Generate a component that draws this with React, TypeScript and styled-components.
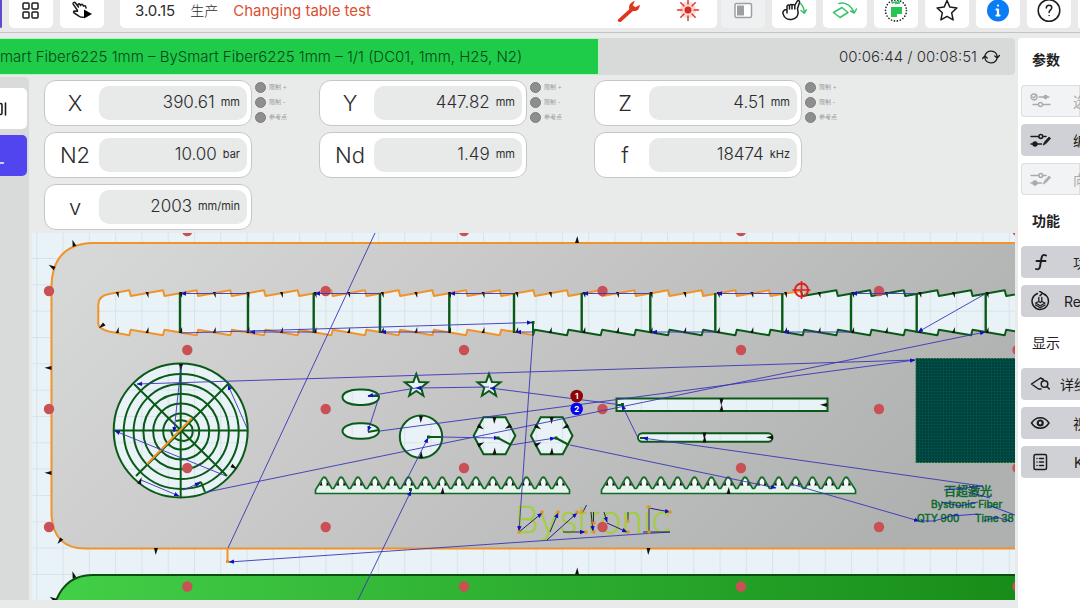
import React from "react";
import styled, { createGlobalStyle } from "styled-components";

const GlobalStyle = createGlobalStyle`
  * { box-sizing: border-box; }
  body {
    margin: 0;
    background: #e9ebeb;
    color: #2c2c2e;
    font-family: Inter, "Noto Sans CJK SC", sans-serif;
    overflow: hidden;
  }
  button { font: inherit; color: inherit; border: 0; padding: 0; cursor: pointer; }
`;

/* ---------- page frame ---------- */

const Page = styled.div`
  display: flex;
  flex-direction: column;
  min-height: 100vh;
`;

const Header = styled.header`
  display: flex;
  height: 33px;
  background: #e9e9e9;
  border-bottom: 1px solid #c4c4c6;
  overflow: hidden;
`;

const TileGroup = styled.nav`
  display: flex;
  flex: none;
  gap: 7px;
`;

const Tile = styled.button<{ $tone?: "muted" | "accent"; $narrow?: boolean }>`
  display: flex;
  flex: none;
  justify-content: center;
  width: ${(p) => (p.$narrow ? 2 : 44)}px;
  height: 28px;
  background: ${(p) => (p.$tone === "muted" ? "#eff0f2" : p.$tone === "accent" ? "#5a4bd0" : "#fff")};
  border-radius: 0 0 5px 5px;
`;

const TitleBar = styled.div`
  display: flex;
  flex: 1;
  align-items: center;
  gap: 15px;
  height: 28px;
  margin: 0 4px 0 16px;
  padding: 0 17px 6px 15px;
  background: #fff;
  border-radius: 0 0 5px 5px;
  font-size: 15px;
  line-height: 20px;
`;

const Mode = styled.span`
  font-size: 14px;
  font-weight: 300;
`;

const JobName = styled.span`
  color: #d9502f;
`;

const TitleTools = styled.div`
  display: flex;
  gap: 34px;
  margin-left: auto;
  height: 22px;
`;

const PlainButton = styled.button`
  display: flex;
  background: none;
`;

const Main = styled.main`
  display: flex;
  flex: 1;
  gap: 3px;
  padding-top: 5px;
`;

const Column = styled.div`
  display: flex;
  flex: 1;
  flex-direction: column;
  min-width: 0;
`;

/* ---------- progress ---------- */

const Progress = styled.div`
  display: flex;
  justify-content: space-between;
  height: 37px;
  background: #d8dada;
  border-radius: 0 4px 4px 0;
  font-size: 15px;
  font-weight: 300;
  line-height: 35px;
  white-space: nowrap;
`;

const ProgressFill = styled.div`
  background: #1fcc49;
  border: solid #b4f5bd;
  border-width: 1px 1px 1px 0;
  color: #07481a;
`;

const Clock = styled.div`
  display: flex;
  align-items: center;
  gap: 5px;
  padding-right: 15px;
  color: #2e2e30;
`;

/* ---------- work area ---------- */

const Body = styled.div`
  display: flex;
  flex: 1;
  gap: 3px;
  padding: 2px 0 8px;
`;

const Rail = styled.aside`
  display: flex;
  flex: none;
  flex-direction: column;
  gap: 6px;
  width: 29px;
  padding: 11px 2px 0 0;
  background: #d9dbdb;
  border-radius: 0 5px 0 0;
`;

const RailButton = styled.button<{ $active?: boolean }>`
  display: flex;
  align-items: center;
  height: 41px;
  background: ${(p) => (p.$active ? "#5145f0" : "#fff")};
  border-radius: 0 5px 5px 0;
`;

const Work = styled.section`
  display: flex;
  flex: 1;
  flex-direction: column;
  gap: 3px;
  min-width: 0;
`;

const Readings = styled.div`
  display: grid;
  grid-template-columns: repeat(3, 275px);
  gap: 6px 0;
  padding: 3px 0 0 12px;
`;

const Reading = styled.div`
  display: flex;
  gap: 3px;
`;

const Card = styled.div`
  display: flex;
  align-items: center;
  width: 208px;
  height: 46px;
  padding-right: 4px;
  background: #fff;
  border: 1px solid #c6c6c8;
  border-radius: 12px;
`;

const AxisName = styled.span`
  flex: 1;
  padding-left: 6px;
  text-align: center;
  font-size: 22px;
  font-weight: 300;
`;

const ValueBox = styled.span`
  display: flex;
  justify-content: flex-end;
  align-items: center;
  gap: 6px;
  width: 148px;
  height: 34px;
  padding: 0 7px 2px 0;
  background: #e8e9e9;
  border-radius: 10px;
  font-size: 17px;
  font-weight: 300;
`;

const Unit = styled.span`
  font-size: 11px;
  font-weight: 400;
`;

const Limits = styled.ul`
  display: flex;
  flex-direction: column;
  gap: 5px;
  margin: 0;
  padding: 2px 0 0;
  list-style: none;
`;

const Limit = styled.li`
  display: flex;
  align-items: center;
  gap: 3px;
  height: 10px;
  color: #9a9a9c;
  font-size: 6px;
  line-height: 10px;

  &::before {
    content: "";
    width: 9px;
    height: 9px;
    background: #8e8e8e;
    border: 1px solid #7c7c7c;
    border-radius: 50%;
  }
`;

const Drawing = styled.svg`
  display: block;
  width: 100%;
  height: 367px;
`;

/* ---------- side panel ---------- */

const Panel = styled.aside`
  flex: none;
  width: 62px;
  padding: 0 0 0 3px;
  background: #fff;
  border-radius: 4px 0 0 0;
  overflow: hidden;
`;

const PanelTitle = styled.h2<{ $light?: boolean }>`
  margin: 0;
  padding-left: 11px;
  font-size: 14px;
  font-weight: ${(p) => (p.$light ? 400 : 700)};
  line-height: 43px;
  height: 47px;
  color: #222;
`;

const PanelGroup = styled.div`
  display: flex;
  flex-direction: column;
  gap: 7px;
  margin-bottom: 4px;
`;

const PanelButton = styled.button<{ $off?: boolean; $indent: number }>`
  display: flex;
  align-items: center;
  height: 32px;
  padding-left: 9px;
  background: ${(p) => (p.$off ? "#f2f3f5" : "#d0d1d6")};
  box-shadow: ${(p) => (p.$off ? "inset 0 0 0 1px #dcdee1" : "none")};
  color: ${(p) => (p.$off ? "#a9abad" : "#1c1c1e")};
  border-radius: 4px 0 0 4px;
  font-size: 14px;
  white-space: nowrap;
  overflow: hidden;

  svg { flex: none; }
  span { padding-left: ${(p) => p.$indent}px; }
`;

/* ---------- icons ---------- */

type IconProps = { w?: number; h?: number; children: React.ReactNode };
const Icon = ({ w = 24, h = 24, children }: IconProps) => (
  <svg
    width={w}
    height={h}
    viewBox={`0 0 ${w} ${h}`}
    fill="none"
    stroke="#1c1c1e"
    strokeWidth="1.5"
    strokeLinecap="round"
    strokeLinejoin="round"
    aria-hidden="true"
  >
    {children}
  </svg>
);

const AppsIcon = () => (
  <Icon>
    {[[4, 3], [13, 3], [4, 12], [13, 12]].map(([x, y]) => (
      <rect key={`${x}${y}`} x={x} y={y} width="6" height="6" rx="1" />
    ))}
  </Icon>
);

const HandRunIcon = () => (
  <Icon>
    <path d="M7.500 10.500 3.200 4.200A1.300 1.300 0 0 1 5.300 2.700L8.500 7l-.7-1.600a1.200 1.200 0 0 1 2.200-.9l.6 1.200a1.200 1.200 0 0 1 2.200-.8l.7 1.300a1.200 1.200 0 0 1 2.100.2l.5 1.600" />
    <path d="M7.500 11.300 4.800 11c-1.500 0-1.600 1.500-.5 2l5 3.300c1.500.900 2.500 1.200 4 .9" />
    <path d="M14 9.500v9l8-4.500z" fill="#000" stroke="none" />
  </Icon>
);

const WrenchIcon = () => (
  <Icon w={26}>
    <path
      d="M2 19.500 13.300 9.300c-1-3.300 1-7.300 5.700-8.300l-2.300 4.300 2.800 2 4.200-2.600c.3 4.300-3.200 7-6.700 6.300L5 21.700c-2 .900-4-.500-3-2.200z"
      fill="#e0341f"
      stroke="none"
    />
  </Icon>
);

const LaserIcon = () => (
  <Icon>
    <circle cx="12" cy="10" r="8" fill="#fbd9d6" stroke="none" />
    <circle cx="12" cy="10" r="3.500" fill="#dd2a1c" stroke="none" />
    <path stroke="#dd3a2c" d="M12 0v4M12 16v4.500M1.500 10H6M18 10h4.500M4.800 2.800 8 6M16 14l3.200 3.200M19.200 2.800 16 6M8 14l-3.200 3.200" />
  </Icon>
);

const SplitIcon = () => (
  <Icon>
    <rect x="4" y="3.500" width="16.500" height="14" rx="1.500" stroke="#9d9fa1" fill="#fff" />
    <rect x="6" y="5.500" width="7" height="10" fill="#9d9fa1" stroke="none" />
  </Icon>
);

const HandTurnIcon = () => (
  <Icon w={28}>
    <path stroke="#37c268" d="M20.500 3.500c2.300 2 3.500 5 3.800 9M21 10.500l3.300 2.800 2-3.500" />
    <path
      fill="#fff"
      d="M7 9.500C4 9.500 2.500 11.500 3 13.500 4 17.500 7.500 20 11.500 19.500 16 19 18.500 16 18 12L17.500 8.500 19.500 2.500C20 .5 17.800 0 17 1.500L14.800 5.500C14.500 4 12.200 4 12 5.500 12 4 9.500 4 9.500 6 9.500 4.700 7 4.700 7 6.500V13M9.500 6V9M12 5.500V9M14.800 5.500V9"
    />
  </Icon>
);

const PlaneTurnIcon = () => (
  <Icon w={26}>
    <path stroke="#37c268" d="M1.500 12.500 10 7.500l6 5-8 5zM7 3.500c6-1.500 12 1.500 15 9M18.500 11l3.800 2 2.200-4" />
  </Icon>
);

const PartIcon = () => (
  <Icon>
    <circle cx="12" cy="10.500" r="10.500" stroke="#222" strokeWidth="1.700" strokeDasharray="0 3" />
    <path d="M7 7h11v7h-5v3H7z" fill="#25c653" stroke="none" />
    <path d="M8 3c3-1.500 5-1.500 7 0M14-1l1.500 4-4 .5" stroke="#37c268" />
  </Icon>
);

const StarIcon = () => (
  <Icon>
    <path d="m12 .5 2.900 6.600 7 .8-5.200 4.900 1.400 7.100L12 16.400l-6.100 3.500 1.400-7.100L2.100 7.900l7-.8z" />
  </Icon>
);

const InfoIcon = () => (
  <Icon>
    <circle cx="12" cy="10.500" r="11" fill="#0a7cf5" stroke="none" />
    <path stroke="#fff" strokeWidth="2.200" d="M12 9.500V15M10.500 9.500H12M10.500 15.500h3M12 5.500v.1" />
  </Icon>
);

const HelpIcon = () => (
  <Icon>
    <circle cx="12" cy="10.500" r="10.800" />
    <path d="M9.300 8c0-3.800 5.500-3.600 5.500-.2 0 2-2.700 2.200-2.700 4.700M12.100 15.500v.1" />
  </Icon>
);

const RepeatIcon = () => (
  <Icon w={18} h={18}>
    <path strokeWidth="1.300" d="M3 7.500A6.300 6.300 0 0 1 15.200 8.500M15 10.500A6.300 6.300 0 0 1 2.800 9.500M12.800 8l2.400 2 2.200-2.500M.6 10.500 2.800 8l2.400 2" />
  </Icon>
);

const CheckSlidersIcon = () => (
  <Icon w={22} h={20}>
    <g stroke="currentColor" strokeWidth="1.300">
      <circle cx="4" cy="6" r="3" />
      <path d="m2.500 6 1.200 1L6 4.500M9 6h10M3 13.500h5M13 13.500h7" />
      <circle cx="15.500" cy="6" r="1.500" fill="currentColor" />
      <circle cx="10.500" cy="13.500" r="2" />
    </g>
  </Icon>
);

const EditSlidersIcon = () => (
  <Icon w={22} h={20}>
    <g stroke="currentColor">
      <path d="M1 6.500h7.500M13 6.500h3M1 14h10.500" />
      <circle cx="10.800" cy="6.500" r="1.900" />
      <circle cx="5" cy="14" r="1.900" fill="currentColor" />
      <path d="M13.300 14.700 14.500 12 19 7l1.600 1.500L16 13.500z" fill="currentColor" strokeWidth="0.800" />
    </g>
  </Icon>
);

const FunctionIcon = () => (
  <Icon w={22} h={20}>
    <path strokeWidth="1.900" d="M16 3.500c-2.600-1.500-4-.200-4.500 2.500L10 14.500C9.500 17 8 18 6 17M6.500 9h9" />
  </Icon>
);

const RestartIcon = () => (
  <Icon w={22} h={20}>
    <path d="M7.500 2.500A8.200 8.200 0 1 0 13.500 2.700M9.500.2l3 2-2.500 2.500" />
    <path d="M8.800 6.500v4L5.500 12l4.800 2.800L15 12l-3.200-1.500v-4M5.500 14l4.800 2.800L15 14M8.800 10.500l1.500 1 1.500-1" strokeWidth="1.300" />
  </Icon>
);

const DetailIcon = () => (
  <Icon w={22} h={20}>
    <path d="M13.500 5.500 10.500 4 1.500 10l7 5h2.500" />
    <circle cx="14.500" cy="10" r="3.300" />
    <path d="m17 12.500 2.300 2.500" />
  </Icon>
);

const EyeIcon = () => (
  <Icon w={22} h={20}>
    <path d="M1.500 10c4.500-7 13-7 17.500 0-4.500 7-13 7-17.500 0z" />
    <circle cx="10.200" cy="10" r="2.500" strokeWidth="2.200" />
  </Icon>
);

const ListIcon = () => (
  <Icon w={22} h={20}>
    <rect x="4" y="2.500" width="12.500" height="15" rx="1.500" />
    <path d="M9.500 6.500h4M9.500 10h4M9.500 13.500h4M7 6.500v.01M7 10v.01M7 13.500v.01" />
  </Icon>
);

/* ---------- cutting plan ---------- */

const GREEN = "#0a5a17";
const ORANGE = "#f0942a";
const PITCH = 33.67;
const FIRST_TOOTH = 129.3;

const toothLine = (from: number, to: number, top: boolean) => {
  const tip = top ? 290.3 : 335.3;
  const root = top ? 296 : 329.7;
  let d = "";
  for (let k = from; k < to; k++) {
    const x = FIRST_TOOTH + k * PITCH;
    d += `L${x} ${tip}L${x + 1.5} ${root}`;
  }
  return d;
};

const topStart = "M98.300 312V305Q98 296 109 294";
const bottomStart = "M98.300 311V324Q99 329 109 331.500";
const slotFill =
  `M98.300 324V305Q98 296 109 294${toothLine(0, 28, true)}V330` +
  Array.from({ length: 28 }, (_, i) => {
    const x = FIRST_TOOTH + (27 - i) * PITCH;
    return `L${x + 1.5} 329.700L${x} 335.300`;
  }).join("") +
  "L109 331.500Q99 329 98.300 324Z";

const ribs = [180, 248, 313.7, 380, 449.3, 514, 581.7, 650.3, 715.3, 782.3, 851, 916.7, 985.7];
const ticks = [117.7, ...Array.from({ length: 26 }, (_, i) => 147.5 + i * 33.6)];

const comb = (left: number) => {
  const peaks = Array.from({ length: 15 }, (_, i) => left + 8.8 + i * 16.85);
  const d =
    `M${left} 493.500V490L${peaks[0] - 1.5} 478` +
    peaks
      .map((p, i) => `Q${p} 476 ${p + 1.5} 478` + (i < 14 ? `L${p + 7.5} 488.500h1.900L${p + 15.3} 478` : ""))
      .join("") +
    `L${left + 254} 490V493.500Z`;
  return { peaks, d };
};

const star = (cx: number, cy: number) =>
  Array.from({ length: 10 }, (_, i) => {
    const r = i % 2 ? 5 : 12;
    const a = (Math.PI / 5) * i - Math.PI / 2;
    return `${cx + r * Math.cos(a)},${cy + r * Math.sin(a)}`;
  }).join(" ");

type Seg = [number, number, number, number];
type Wedge = [number, number, number];

const travel: Seg[] = [
  [375, 233, 228, 548],
  [670, 532, 229, 562],
  [915, 360, 137, 384],
  [207, 492, 985, 332],
  [380, 431, 915, 360],
  [181, 366, 174, 432],
  [226, 476, 115, 431],
  [247, 428, 228, 385],
  [141, 480, 179, 496],
  [183, 490, 200, 483],
  [358, 600, 411, 491],
  [405, 483, 428, 438],
  [378, 400, 368, 431],
  [416, 388, 368, 396],
  [489, 387, 416, 388],
  [622, 405, 490, 388],
  [638, 438, 622, 405],
  [982, 486, 643, 438],
  [440, 437, 499, 438],
  [511, 445, 555, 438],
  [570, 445, 776, 488],
  [791, 484, 919, 521],
  [533, 334, 519, 531],
  [248, 293.5, 181, 293.5],
  [380, 293.5, 315, 293.5],
  [514, 293.5, 450, 293.5],
  [650, 293.5, 583, 293.5],
  [782, 293.5, 717, 293.5],
  [916, 293.5, 852, 293.5],
  [985, 294, 918, 332],
  [315, 332, 250, 332],
  [449, 332, 381, 332],
  [533, 332, 516, 332],
  [715, 332, 652, 332],
  [851, 332, 784, 332],
  [181, 333, 532, 322.5],
];

const markTravel: Seg[] = [
  [519, 532, 542, 513],
  [550, 532, 558, 513],
  [547, 540, 577, 513],
  [563, 532, 585, 532],
  [591, 512, 593, 531],
  [604, 512, 607, 522],
  [607, 523, 627, 532],
  [649, 508, 670, 512],
];

const markPoints = [
  [519, 532], [542, 512], [558, 512], [577, 512], [582, 512], [586, 532], [594, 532],
  [594, 523], [628, 532], [628, 521], [649, 507], [649, 532], [670, 512],
];

/* small black lead-in wedges: x, y, rotation in degrees */
const wedges: Wedge[] = [
  [577, 240, 0], [648.5, 551, 180], [577, 571.5, 0], [156, 551, 180],
  [48.5, 368, -90], [48.5, 473, -90], [52, 267, -60], [73.5, 243.5, -20],
  [60, 541, 215], [73.5, 575, -20], [53, 599, -60], [102, 326, 230],
  [421, 419, 180], [421, 455, 0], [442.5, 491, 0], [728.5, 491, 0],
  [721.5, 401.5, 180], [721.5, 408.5, 0], [704.5, 435.5, 180],
  [704.5, 439.5, 0], [824, 405, -90], [770, 437.5, -90],
  [234, 467, 120], [140, 481, 20], [181, 367, 180],
  ...[494.5, 551.7].flatMap((x): Wedge[] => [
    [x, 420, 180], [x, 451.5, 0], [x - 14, 427, 120], [x + 14, 427, 240], [x - 14, 444, 60],
  ]),
];

const dots = [
  ...[231, 350, 468, 586.5].flatMap((y) => [187.3, 464, 741, 1017.5].map((x) => [x, y])),
  ...[291, 409, 527].flatMap((y) => [49, 325.7, 602.5, 879].map((x) => [x, y])),
];

const hex = (cx: number) =>
  `${cx - 20.8},435.700 ${cx - 11},417.200 ${cx + 11},417.200 ${cx + 20.8},435.700 ${cx + 11},454.200 ${cx - 11},454.200`;

const CuttingPlan = () => (
  <Drawing viewBox="32 233 983 367" preserveAspectRatio="xMinYMin slice" role="img" aria-label="Cutting plan">
    <defs>
      <pattern id="bed" x="36.300" y="258" width="26.280" height="26.330" patternUnits="userSpaceOnUse">
        <rect width="27" height="27" fill="#e9f3f7" />
        <path d="M0 .5H27M.5 0V27" stroke="#d8e3e8" />
      </pattern>
      <pattern id="mesh" x="916" y="358" width="3" height="3" patternUnits="userSpaceOnUse">
        <rect width="3" height="3" fill="#00403c" />
        <rect width="1" height="3" fill="#024e46" />
        <rect width="3" height="1" fill="#024e46" />
      </pattern>
      <linearGradient id="sheet" x1="0" y1="0.200" x2="1" y2="0.500">
        <stop offset="0" stopColor="#d6d8d7" />
        <stop offset="0.300" stopColor="#cbcccb" />
        <stop offset="1" stopColor="#afb0b0" />
      </linearGradient>
      <linearGradient id="sheet2">
        <stop offset="0" stopColor="#43cf48" />
        <stop offset="1" stopColor="#178c18" />
      </linearGradient>
      <marker id="tip" markerUnits="userSpaceOnUse" markerWidth="6" markerHeight="5" refX="5" refY="2.500" orient="auto">
        <path d="M0 .3 5.500 2.500 0 4.700z" fill="#1010c0" />
      </marker>
    </defs>

    <rect x="32" y="233" width="983" height="367" fill="url(#bed)" />

    <path
      d="M1030 243H93Q51.500 244 51.500 288V516Q54 548.500 85 548.500H1030z"
      fill="url(#sheet)"
      stroke={ORANGE}
      strokeWidth="2"
    />
    <path d="M54 606Q64 575 92 575H1030V606z" fill="url(#sheet2)" stroke="#0b4d0e" strokeWidth="2" />

    <path d={slotFill} fill="url(#bed)" />
    <g fill="none" strokeWidth="2" strokeLinejoin="round">
      <path d={`${topStart}${toothLine(0, 20, true)}L801 291`} stroke={ORANGE} />
      <path d={`M801 291L802.500 296${toothLine(21, 28, true)}`} stroke={GREEN} />
      <path d={`${bottomStart}${toothLine(0, 12, false)}L533 335`} stroke={ORANGE} />
      <path d={`M533 323V335L534.800 329.700${toothLine(13, 28, false)}`} stroke={GREEN} />
    </g>
    <path d={ribs.map((x) => `M${x} 293V333`).join("")} stroke={GREEN} strokeWidth="2.400" />
    <path d={ticks.map((x) => `M${x - 2} 292l3 6v-6zM${x - 2} 333l3-6v6z`).join("")} fill="#111" />

    <g stroke={GREEN} strokeWidth="2" fill="url(#bed)">
      <circle cx="180.700" cy="430.500" r="67" />
      <g fill="none">
        {[57.5, 47.6, 37.8, 28, 18].map((r) => (
          <circle key={r} cx="181.200" cy="431.500" r={r} />
        ))}
        <path d="M171 431Q173 441 184 441Q195 439 192 427Q187 418 176 421" />
        <path d="M180.700 364V497M114 430.500H247.500M134 384 227 476M228 384 136 476" />
        <path d="M192 418 147 464" stroke={ORANGE} />
        <path d="M201 482 205 492M195 485 201 482" />
      </g>
      <rect x="342.500" y="389.500" width="36.500" height="15.500" rx="16" ry="7.700" />
      <rect x="342.500" y="423.300" width="36.500" height="15.500" rx="16" ry="7.700" />
      <polygon points={star(416.3, 386)} />
      <polygon points={star(489, 386)} />
      <circle cx="421" cy="436.700" r="21.200" />
      <polygon points={hex(494.5)} />
      <polygon points={hex(551.7)} />
      <rect x="616.500" y="398.500" width="211" height="12.500" />
      <rect x="638" y="433.300" width="134.500" height="8.400" rx="4.200" />
      <path d="M429 437H441M498 438 511 445M556 438 569 445M616 405H622M368 396H378M368 432 379 430M640 438H646" fill="none" />
    </g>

    {[315.5, 601.5].map((left) => {
      const c = comb(left);
      return (
        <g key={left}>
          <path d={c.d} fill="#e6f3ee" />
          <path d={c.peaks.map((p) => `M${p - 5} 485.500L${p} 477.500L${p + 5} 485.500z`).join("")} fill="#111" />
          {c.peaks.map((p) => (
            <ellipse key={p} cx={p} cy="482.500" rx="2.400" ry="4" fill="#f4faf9" />
          ))}
          <path d={c.d} fill="none" stroke="#136b25" strokeWidth="1.700" />
        </g>
      );
    })}

    <text x="515" y="533" fontFamily="Inter" fontSize="37" fontWeight="200" fill="#a2cf3a" stroke="#a2cf3a" strokeWidth="0.400">
      Bystronic
    </text>

    <rect x="916" y="358.500" width="110" height="104" fill="url(#mesh)" stroke="#0a6a2a" strokeDasharray="2 1" />
    <g fill="#0b6b2c" stroke="#0b6b2c" strokeWidth="0.500" fontFamily="Inter, 'Noto Sans CJK SC', sans-serif" fontSize="10">
      <text x="944" y="496" fontSize="12">百超激光</text>
      <text x="931" y="508">Bystronic Fiber</text>
      <text x="917" y="522">QTY 900</text>
      <text x="975" y="522">Time 38</text>
    </g>
    <path
      d="M944 490 966 488 983 486M968 492 990 498M941 502 960 506 978 502M988 505 1015 515M921 521 934 521 958 514M952 516 978 514M984 521 996 517 1010 521"
      stroke="#1616c8"
      strokeWidth="0.800"
      fill="none"
    />

    {wedges.map(([x, y, turn]) => (
      <path key={`${x},${y}`} d="M-2 3 .3-4 2 3z" transform={`translate(${x} ${y}) rotate(${turn})`} fill="#111" />
    ))}

    {dots.map(([x, y]) => (
      <circle key={`${x},${y}`} cx={x} cy={y} r="5.200" fill="#c95055" />
    ))}

    <path d="M227.500 548V562" stroke={ORANGE} strokeWidth="2" />
    <rect x="226" y="560" width="3" height="3" fill={ORANGE} />

    <g stroke="#3a34b8" strokeWidth="0.900">
      {travel.map(([x1, y1, x2, y2], i) => (
        <line key={i} x1={x1} y1={y1} x2={x2} y2={y2} markerEnd={i ? "url(#tip)" : undefined} />
      ))}
    </g>
    <g stroke="#22226a">
      {markTravel.map(([x1, y1, x2, y2], i) => (
        <line key={i} x1={x1} y1={y1} x2={x2} y2={y2} markerEnd="url(#tip)" />
      ))}
      <path d="M586.500 505 583 512M593.500 512V522M628 512V521M643 532H670M649 508V532" />
    </g>
    {markPoints.map(([x, y]) => (
      <rect key={`${x},${y}`} x={x - 1.5} y={y - 1.5} width="3" height="3" fill="#ef8a2b" />
    ))}
    <g fill={GREEN}>
      <rect x="531.500" y="321" width="3" height="3" />
      <rect x="427" y="435.500" width="3" height="3" />
      <rect x="496.500" y="436.500" width="3" height="3" />
      <rect x="554.500" y="436.500" width="3" height="3" />
      <rect x="621" y="403" width="3" height="3" />
      <rect x="409" y="488" width="3" height="3" />
    </g>

    <g stroke="#e01f1f" strokeWidth="2" fill="none">
      <circle cx="801.500" cy="290" r="6.500" />
      <path d="M792.500 290H810.500M801.500 281V299" strokeWidth="1.600" />
    </g>

    <circle cx="576.700" cy="396" r="6.300" fill="#8e0505" />
    <circle cx="576.700" cy="408.700" r="6.300" fill="#0505f0" />
    <g fill="#fff" fontFamily="Inter" fontSize="8" fontWeight="700" textAnchor="middle">
      <text x="576.700" y="399">1</text>
      <text x="576.700" y="411.700">2</text>
    </g>
  </Drawing>
);

/* ---------- data ---------- */

const readings = [
  { name: "X", value: "390.61", unit: "mm", limits: true },
  { name: "Y", value: "447.82", unit: "mm", limits: true },
  { name: "Z", value: "4.51", unit: "mm", limits: true },
  { name: "N2", value: "10.00", unit: "bar" },
  { name: "Nd", value: "1.49", unit: "mm" },
  { name: "f", value: "18474", unit: "kHz" },
  { name: "v", value: "2003", unit: "mm/min" },
];

const groups = [
  {
    title: "参数",
    items: [
      { label: "选", icon: <CheckSlidersIcon />, indent: 21, off: true },
      { label: "编", icon: <EditSlidersIcon />, indent: 21 },
      { label: "向", icon: <EditSlidersIcon />, indent: 21, off: true },
    ],
  },
  {
    title: "功能",
    items: [
      { label: "功", icon: <FunctionIcon />, indent: 21 },
      { label: "Re", icon: <RestartIcon />, indent: 12 },
    ],
  },
  {
    title: "显示",
    light: true,
    items: [
      { label: "详细", icon: <DetailIcon />, indent: 8 },
      { label: "视", icon: <EyeIcon />, indent: 21 },
      { label: "K", icon: <ListIcon />, indent: 22 },
    ],
  },
];

const progress = 59;

export default function App() {
  return (
    <Page>
      <GlobalStyle />
      <Header>
        <TileGroup>
          <Tile $tone="accent" $narrow aria-label="Home" />
          <Tile aria-label="Apps"><AppsIcon /></Tile>
          <Tile aria-label="Manual run"><HandRunIcon /></Tile>
        </TileGroup>
        <TitleBar>
          <span>3.0.15</span>
          <Mode>生产</Mode>
          <JobName>Changing table test</JobName>
          <TitleTools>
            <PlainButton aria-label="Service"><WrenchIcon /></PlainButton>
            <PlainButton aria-label="Laser"><LaserIcon /></PlainButton>
          </TitleTools>
        </TitleBar>
        <TileGroup>
          <Tile $tone="muted" aria-label="Split view"><SplitIcon /></Tile>
          <Tile aria-label="Manual rotate"><HandTurnIcon /></Tile>
          <Tile aria-label="Rotate plane"><PlaneTurnIcon /></Tile>
          <Tile aria-label="Part"><PartIcon /></Tile>
          <Tile aria-label="Favourites"><StarIcon /></Tile>
          <Tile aria-label="Information"><InfoIcon /></Tile>
          <Tile aria-label="Help"><HelpIcon /></Tile>
          <Tile $narrow aria-label="More" />
        </TileGroup>
      </Header>

      <Main>
        <Column>
          <Progress>
            <ProgressFill style={{ width: `${progress}%` }}>
              mart Fiber6225 1mm – BySmart Fiber6225 1mm – 1/1 (DC01, 1mm, H25, N2)
            </ProgressFill>
            <Clock>
              00:06:44 / 00:08:51
              <RepeatIcon />
            </Clock>
          </Progress>

          <Body>
            <Rail>
              <RailButton aria-label="Columns">
                <Icon w={12} h={20}>
                  <path d="M-3 4.500H.5Q2 4.500 2 6v8q0 1.500-1.500 1.500H-3M5.500 4v12" strokeWidth="1.600" />
                </Icon>
              </RailButton>
              <RailButton $active aria-label="Current view">
                <Icon w={12} h={20}>
                  <path d="M-2 17H3.500" stroke="#fff" />
                </Icon>
              </RailButton>
            </Rail>

            <Work>
              <Readings>
                {readings.map((r) => (
                  <Reading key={r.name}>
                    <Card>
                      <AxisName>{r.name}</AxisName>
                      <ValueBox>
                        {r.value}
                        <Unit>{r.unit}</Unit>
                      </ValueBox>
                    </Card>
                    {r.limits && (
                      <Limits>
                        <Limit>限制 +</Limit>
                        <Limit>限制 -</Limit>
                        <Limit>参考点</Limit>
                      </Limits>
                    )}
                  </Reading>
                ))}
              </Readings>
              <CuttingPlan />
            </Work>
          </Body>
        </Column>

        <Panel>
          {groups.map((g) => (
            <section key={g.title}>
              <PanelTitle $light={g.light}>{g.title}</PanelTitle>
              <PanelGroup>
                {g.items.map((item) => (
                  <PanelButton key={item.label} $off={item.off} $indent={item.indent} disabled={item.off}>
                    {item.icon}
                    <span>{item.label}</span>
                  </PanelButton>
                ))}
              </PanelGroup>
            </section>
          ))}
        </Panel>
      </Main>
    </Page>
  );
}
